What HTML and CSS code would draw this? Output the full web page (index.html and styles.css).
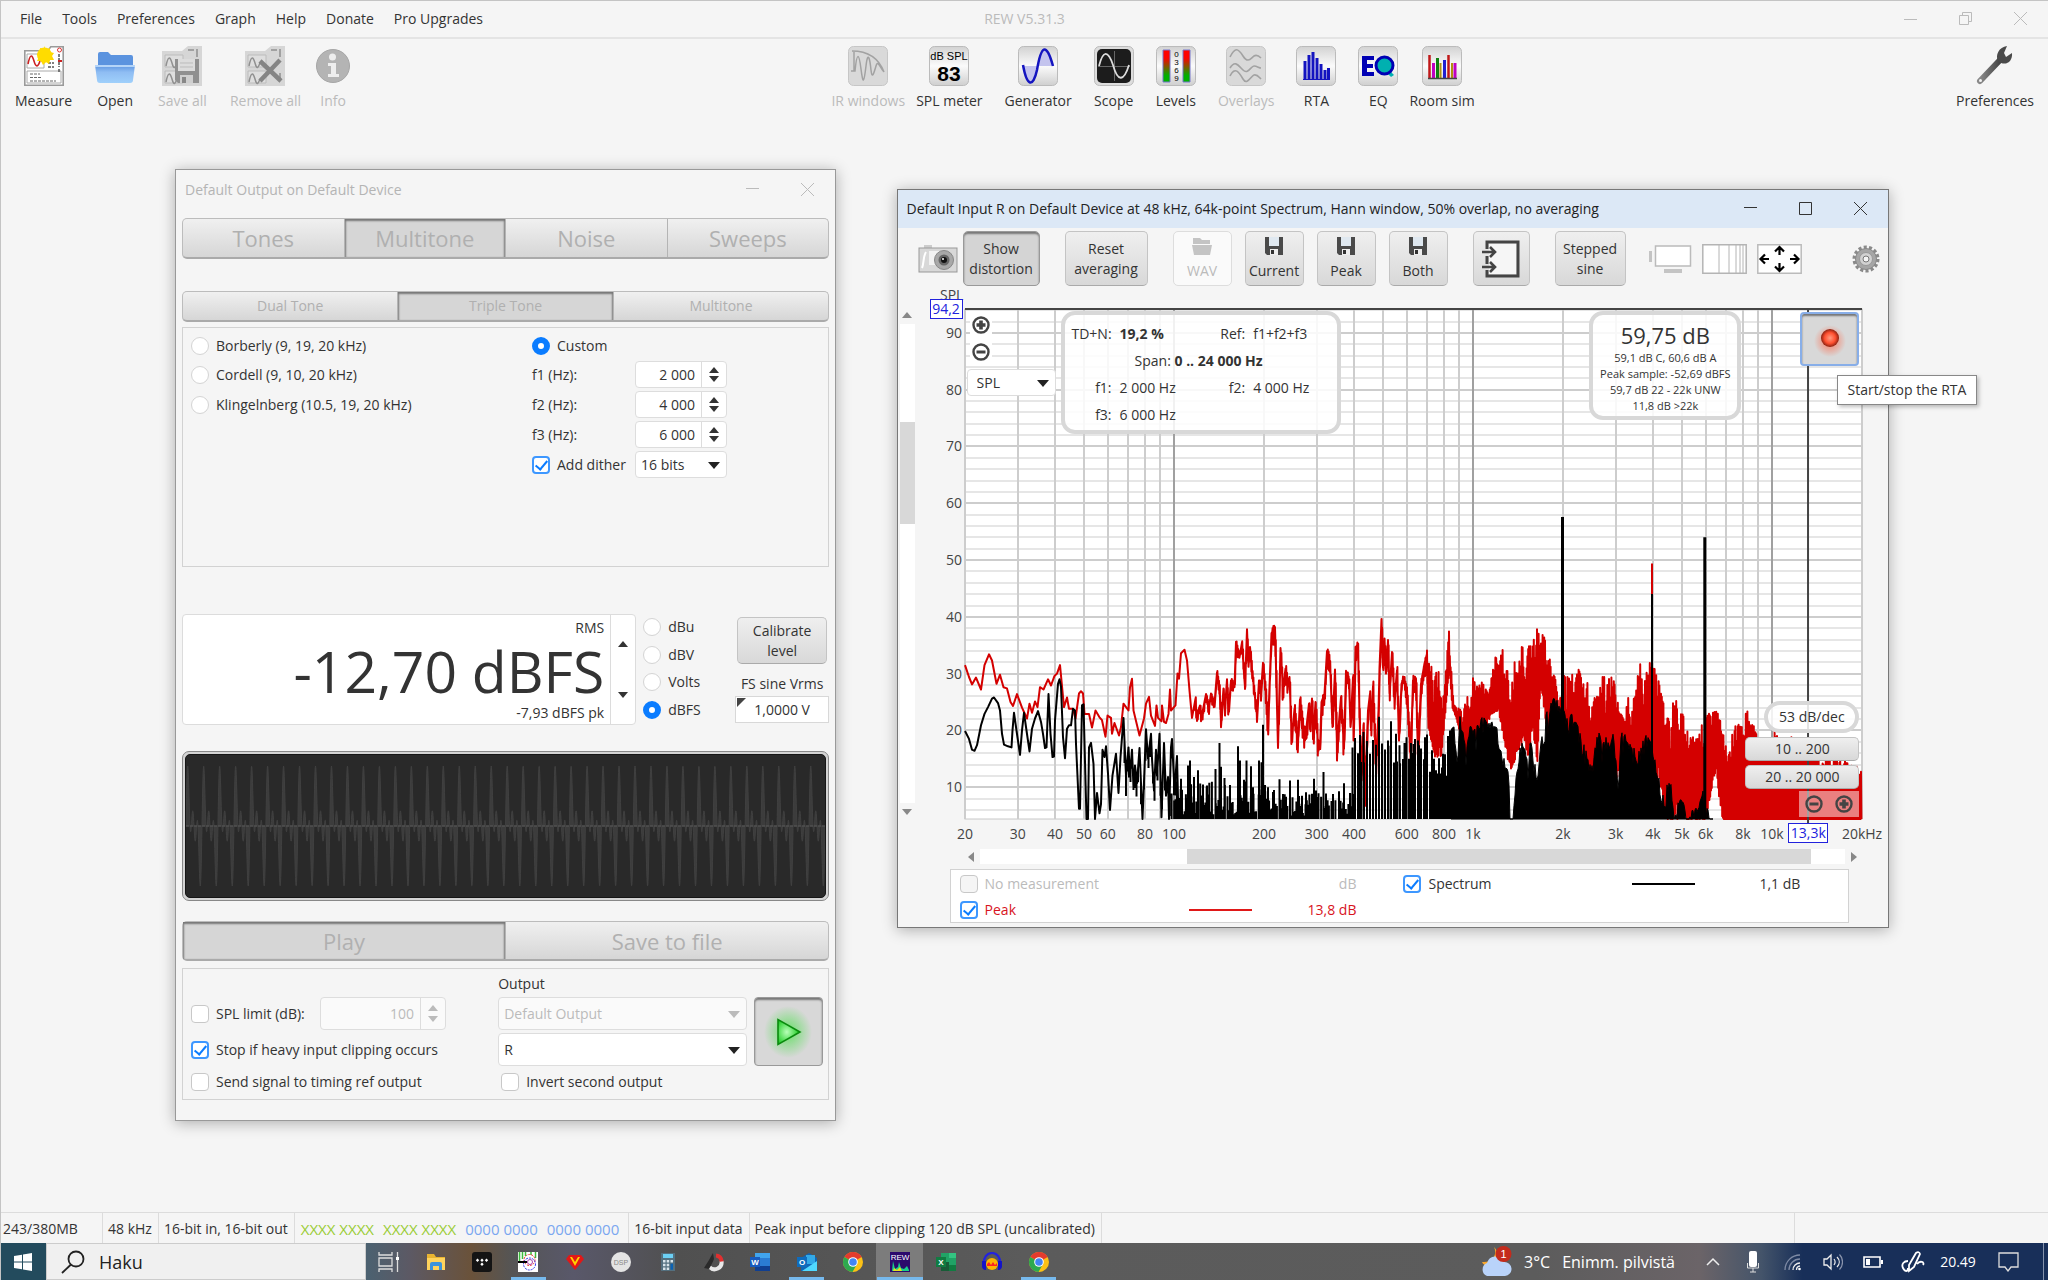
FILE: index.html
```
<!DOCTYPE html>
<html lang="en">
<head>
  <meta charset="UTF-8" />
  <meta name="viewport" content="width=device-width, initial-scale=1" />
  <title>REW V5.31.3</title>
  <link rel="stylesheet" href="styles.css">
</head>
<body>
  <!-- shared icons -->
  <svg class="defs" width="0" height="0" aria-hidden="true">
    <defs>
      <linearGradient id="gTile" x1="0" y1="0" x2="0" y2="1">
        <stop offset="0" stop-color="#d2d2d2" /><stop offset=".5" stop-color="#fbfbfb" /><stop offset="1" stop-color="#cfcfcf" />
      </linearGradient>
      <linearGradient id="gFolder" x1="0" y1="0" x2="0" y2="1">
        <stop offset="0" stop-color="#5c94e0" /><stop offset=".4" stop-color="#8fbdf3" /><stop offset="1" stop-color="#9fd0fb" />
      </linearGradient>
      <linearGradient id="gLevel" x1="0" y1="0" x2="0" y2="1">
        <stop offset="0" stop-color="#ff0000" /><stop offset=".25" stop-color="#ff0000" /><stop offset=".8" stop-color="#00b000" /><stop offset="1" stop-color="#00b000" />
      </linearGradient>
      <linearGradient id="gWrench" x1="0" y1="0" x2="1" y2="0">
        <stop offset="0" stop-color="#8a8a8a" /><stop offset="1" stop-color="#444" />
      </linearGradient>
      <radialGradient id="gPlay" cx=".4" cy=".5" r=".6">
        <stop offset="0" stop-color="#b8ffb8" /><stop offset="1" stop-color="#14c81a" />
      </radialGradient>
      <radialGradient id="gGlow">
        <stop offset="0" stop-color="#4ce04c" stop-opacity=".8" /><stop offset="1" stop-color="#4ce04c" stop-opacity="0" />
      </radialGradient>
      <radialGradient id="gLed">
        <stop offset="0" stop-color="#ff9a80" /><stop offset=".6" stop-color="#ff5030" /><stop offset="1" stop-color="#8a2010" />
      </radialGradient>
      <radialGradient id="gLedGlow">
        <stop offset="0" stop-color="#ff6040" stop-opacity=".8" /><stop offset="1" stop-color="#ff6040" stop-opacity="0" />
      </radialGradient>
      <symbol id="i-floppy" viewBox="0 0 18 18">
        <path d="M0 0h18v18H2L0 16z" fill="#4a4a4a" />
        <path d="M4 0h10v9H4z" fill="#dfe8f0" /><path d="M5 12h8v6H5z" fill="#eee" /><path d="M6 13h3v4H6z" fill="#333" />
      </symbol>
      <symbol id="i-plus" viewBox="0 0 18 18">
        <circle cx="9" cy="9" r="7.5" fill="none" stroke="#444" stroke-width="2.4" />
        <path d="M9 4.500v9M4.500 9h9" stroke="#444" stroke-width="3.600" />
      </symbol>
      <symbol id="i-minus" viewBox="0 0 18 18">
        <circle cx="9" cy="9" r="7.5" fill="none" stroke="#444" stroke-width="2.4" />
        <path d="M4.500 9h9" stroke="#444" stroke-width="3" />
      </symbol>
      <symbol id="i-chrome" viewBox="0 0 20 20">
        <circle cx="10" cy="10" r="10" fill="#fbc116" />
        <path d="M10 10L1.340 5A10 10 0 0 1 18.700 5z" fill="#e33b2e" />
        <path d="M10 10L1.340 5A10 10 0 0 0 9.500 20L14 12z" fill="#2da94f" />
        <circle cx="10" cy="10" r="4.800" fill="#fff" /><circle cx="10" cy="10" r="3.800" fill="#4285f4" />
      </symbol>
    </defs>
  </svg>

  <header class="menubar">
    <nav class="menu">
      <button type="button">File</button>
      <button type="button">Tools</button>
      <button type="button">Preferences</button>
      <button type="button">Graph</button>
      <button type="button">Help</button>
      <button type="button">Donate</button>
      <button type="button">Pro Upgrades</button>
    </nav>
    <div class="app-title">REW V5.31.3</div>
    <div class="win-controls app-controls">
      <button type="button" aria-label="Minimize"><svg width="14" height="14"><path d="M0 7.500h13" /></svg></button>
      <button type="button" aria-label="Restore"><svg width="14" height="14"><path d="M.5 3.500h9v9h-9zM3.500 3.500v-3h9v9h-3" /></svg></button>
      <button type="button" aria-label="Close"><svg width="14" height="14"><path d="M0 0l13 13M13 0L0 13" /></svg></button>
    </div>
  </header>

  <div class="toolbar">
    <div class="tool-group">
      <button type="button" class="tool">
        <svg width="40" height="40">
          <path d="M.8 4.800h23l3-4h12.400v38.400H.8z" fill="#fff" stroke="#9a9a9a" stroke-width="1.600" />
          <path d="M3 8h17v14H3zM3 25h34v12H3z" fill="#fff" stroke="#aaa" />
          <path d="M4 18c2-10 4-10 6-3s4 6 6 0" fill="none" stroke="#c22" stroke-width="1.600" />
          <path d="M6 28h10M6 31.500h12M6 35h26" stroke="#666" stroke-dasharray="3 1" />
          <path d="M24 17h6M24 21h6M35 8v6M35 16v5M35 23v3" stroke="#555" stroke-dasharray="3 1" stroke-width="1.500" />
          <circle cx="35.500" cy="4" r="2" fill="#fff" stroke="#d33" /><path d="M34 15h4" stroke="#c22" stroke-width="2" />
          <path d="M20 0l2 4 4-2 0 4 4 1-2 3 2 4-4 0-1 4-3-2-3 3-2-4-4 0 2-4-2-3 3-2 0-4 4 1z" fill="#ffd800" />
          <circle cx="20.500" cy="9" r="7.500" fill="#ffdc00" />
        </svg>
        <span>Measure</span>
      </button>
      <button type="button" class="tool">
        <svg width="40" height="40">
          <path d="M3 8q0-2 2-2h8l3 3h20q2 0 2 2v10H3z" fill="#5b93df" />
          <path d="M0 19h40l-2 15q0 3-3 3H5q-3 0-3-3z" fill="url(#gFolder)" />
          <path d="M0 19h40v2H0z" fill="#b4d4f8" />
        </svg>
        <span>Open</span>
      </button>
      <button type="button" class="tool" disabled>
        <svg width="40" height="40">
          <path d="M0 5h20L26 0h14v40H0z" fill="#d6d6d6" /><path d="M3 9h18v12H3zM3 25h18v12H3z" fill="#dedede" stroke="#bcbcbc" />
          <path d="M4 20c2-10 4-10 6-3s3 5 5 0M4 36c2-10 4-10 6-3s3 5 5 0M26 4h6M35 3v8" fill="none" stroke="#909090" stroke-width="1.500" />
          <path d="M13 13h24v24H16l-3-3z" fill="#909090" /><path d="M16 13h17v12H16z" fill="#dcdcdc" /><path d="M18 17h13M18 21h13" stroke="#bbb" /><path d="M18 29h13v8H18z" fill="#cfcfcf" /><path d="M20 31h4v6h-4z" fill="#888" />
        </svg>
        <span>Save all</span>
      </button>
      <button type="button" class="tool remove" disabled>
        <svg width="40" height="40">
          <path d="M0 5h20L26 0h14v40H0z" fill="#d6d6d6" /><path d="M3 9h18v12H3zM3 25h18v12H3z" fill="#dedede" stroke="#bcbcbc" />
          <path d="M4 20c2-10 4-10 6-3s3 5 5 0M4 36c2-10 4-10 6-3s3 5 5 0M26 4h6M35 3v8M35 27v8" fill="none" stroke="#909090" stroke-width="1.500" />
          <path d="M15 15l21 20M35 14L15 35" stroke="#858585" stroke-width="4.500" />
        </svg>
        <span>Remove all</span>
      </button>
      <button type="button" class="tool" disabled>
        <svg width="34" height="40">
          <circle cx="17" cy="20" r="16.500" fill="#b4b4b4" stroke="#a6a6a6" /><circle cx="16.500" cy="11" r="3.500" fill="#eee" />
          <path d="M12 17h8v11h3v3H12v-3h3v-8h-3z" fill="#eee" />
        </svg>
        <span>Info</span>
      </button>
    </div>

    <div class="tool-group tool-center">
      <button type="button" class="tool tight" disabled>
        <svg width="40" height="40"><rect x=".5" y=".5" width="39" height="39" rx="5" fill="#d9d9d9" stroke="#c6c6c6" />
          <path d="M4 5c16 0 27 8 32 21M6 6v19M3 25h4c2-20 4-18 6-2s3 14 5-3 4-6 5 4 3 3 5-4 4 2 8 6" fill="none" stroke="#a2a2a2" stroke-width="1.500" /></svg>
        <span>IR windows</span>
      </button>
      <button type="button" class="tool">
        <svg width="40" height="40"><rect x=".5" y=".5" width="39" height="39" rx="5" fill="url(#gTile)" stroke="#bbb" />
          <text x="20" y="14" class="t-small">dB SPL</text><text x="20" y="35" class="t-big">83</text></svg>
        <span>SPL meter</span>
      </button>
      <button type="button" class="tool">
        <svg width="40" height="40"><rect x=".5" y=".5" width="39" height="39" rx="5" fill="url(#gTile)" stroke="#bbb" />
          <path d="M5 20h14c-4 20-10 22-14 0zM20 20c4-21 11-22 15 0z" fill="#c4c4ee" />
          <path d="M5 19c4 22 10 23 14 5 4-24 9-29 16-4" fill="none" stroke="#1414c0" stroke-width="2.500" /></svg>
        <span>Generator</span>
      </button>
      <button type="button" class="tool">
        <svg width="40" height="40"><rect x=".5" y=".5" width="39" height="39" rx="5" fill="#ddd" stroke="#bbb" /><rect x="3" y="3" width="34" height="34" rx="5" fill="#1c1c1c" />
          <path d="M4 20.500h32M20.500 5v30" stroke="#666" /><path d="M5 20c4-16 9-16 14-1 5 18 11 16 16 0" fill="none" stroke="#ddd" stroke-width="1.800" /></svg>
        <span>Scope</span>
      </button>
      <button type="button" class="tool">
        <svg width="40" height="40"><rect x=".5" y=".5" width="39" height="39" rx="5" fill="url(#gTile)" stroke="#bbb" />
          <path d="M7 4h7v32H7zM27 4h7v32h-7z" fill="url(#gLevel)" stroke="#77c" />
          <text x="20.500" y="11" class="t-tiny">0</text><text x="20.500" y="19" class="t-tiny">3</text><text x="20.500" y="27" class="t-tiny">6</text><text x="20.500" y="35" class="t-tiny">9</text></svg>
        <span>Levels</span>
      </button>
      <button type="button" class="tool" disabled>
        <svg width="40" height="40"><rect x=".5" y=".5" width="39" height="39" rx="5" fill="#d9d9d9" stroke="#c6c6c6" />
          <path d="M4 11c5-10 8-9 13-1s8 2 11 0 5 0 7 2M4 22c5-8 8-3 13 2s8-4 11-4 5 2 7 2M4 30c5-10 9-4 13 3s8-3 11-4 5 2 7 4" fill="none" stroke="#a2a2a2" stroke-width="1.600" /></svg>
        <span>Overlays</span>
      </button>
      <button type="button" class="tool">
        <svg width="40" height="40"><rect x=".5" y=".5" width="39" height="39" rx="5" fill="url(#gTile)" stroke="#bbb" />
          <path d="M9 34V15M13 34V9M17 34V6M21 34V12M25 34V18M29 34V24M32.500 34V22" stroke="#1414c0" stroke-width="3" /><path d="M7 33.500h27" stroke="#1414c0" /></svg>
        <span>RTA</span>
      </button>
      <button type="button" class="tool tight">
        <svg width="40" height="40"><rect x=".5" y=".5" width="39" height="39" rx="5" fill="url(#gTile)" stroke="#bbb" />
          <path d="M31 24l5 5-3 2-4-4z" fill="#00b0b0" />
          <path d="M4 10h12v4H9v4h6v4H9v4h7v4H4z" fill="#0000b4" />
          <circle cx="26.500" cy="19.500" r="8.500" fill="#00b0b0" stroke="#0000b4" stroke-width="3" /></svg>
        <span>EQ</span>
      </button>
      <button type="button" class="tool">
        <svg width="40" height="40"><rect x=".5" y=".5" width="39" height="39" rx="5" fill="url(#gTile)" stroke="#bbb" />
          <path d="M7.500 32V9M26.500 32V9" stroke="#c01818" stroke-width="2.500" /><path d="M11.500 32V17M33 32V17" stroke="#c000c0" stroke-width="3" />
          <path d="M15.500 32V12" stroke="#108010" stroke-width="3" /><path d="M18.500 32V17M30 32V17" stroke="#b09010" stroke-width="2" /><path d="M22.500 32V14" stroke="#2020d0" stroke-width="3" /><path d="M6 32.500h29" stroke="#444" stroke-width="1.500" /></svg>
        <span>Room sim</span>
      </button>
    </div>

    <div class="tool-group">
      <button type="button" class="tool">
        <svg width="40" height="40">
          <path d="M5 35L25 14" stroke="url(#gWrench)" stroke-width="6" stroke-linecap="round" />
          <path d="M23 15c-3-6 1-14 9-15l-3 7 2 4 6-4c1 9-7 14-14 8z" fill="#4a4a4a" />
          <circle cx="5.500" cy="34.500" r="1.500" fill="#f5f5f5" />
        </svg>
        <span>Preferences</span>
      </button>
    </div>
  </div>

  <main class="desktop">
    <!-- signal generator -->
    <section class="window generator">
      <div class="titlebar">
        <h2>Default Output on Default Device</h2>
        <div class="win-controls">
          <button type="button" aria-label="Minimize"><svg width="14" height="14"><path d="M0 5.500h13" /></svg></button>
          <button type="button" aria-label="Close"><svg width="14" height="14"><path d="M0 0l13 13M13 0L0 13" /></svg></button>
        </div>
      </div>
      <div class="gen-body">
        <div class="tabs tabs-large">
          <button type="button">Tones</button>
          <button type="button" class="active">Multitone</button>
          <button type="button">Noise</button>
          <button type="button">Sweeps</button>
        </div>
        <div class="tabs tabs-small">
          <button type="button">Dual Tone</button>
          <button type="button" class="active">Triple Tone</button>
          <button type="button">Multitone</button>
        </div>

        <div class="panel tone-panel">
          <label class="choice"><input type="radio" name="preset" /> Borberly (9, 19, 20 kHz)</label>
          <label class="choice span2"><input type="radio" name="preset" checked /> Custom</label>

          <label class="choice"><input type="radio" name="preset" /> Cordell (9, 10, 20 kHz)</label>
          <label for="f1">f1 (Hz):</label>
          <div class="spinner"><input type="text" id="f1" value="2 000" /><div class="steps"><button type="button" class="up" aria-label="Up"></button><button type="button" class="down" aria-label="Down"></button></div></div>

          <label class="choice"><input type="radio" name="preset" /> Klingelnberg (10.5, 19, 20 kHz)</label>
          <label for="f2">f2 (Hz):</label>
          <div class="spinner"><input type="text" id="f2" value="4 000" /><div class="steps"><button type="button" class="up" aria-label="Up"></button><button type="button" class="down" aria-label="Down"></button></div></div>

          <label for="f3" class="col2">f3 (Hz):</label>
          <div class="spinner"><input type="text" id="f3" value="6 000" /><div class="steps"><button type="button" class="up" aria-label="Up"></button><button type="button" class="down" aria-label="Down"></button></div></div>

          <label class="choice col2"><input type="checkbox" checked /> Add dither</label>
          <div class="select"><select aria-label="Dither bits"><option>16 bits</option></select></div>
        </div>

        <div class="level-row">
          <div class="lcd">
            <div class="lcd-text">
              <span>RMS</span>
              <strong>-12,70 dBFS</strong>
              <span>-7,93 dBFS pk</span>
            </div>
            <div class="lcd-steps"><button type="button" class="up" aria-label="Up"></button><button type="button" class="down" aria-label="Down"></button></div>
          </div>
          <div class="units">
            <label class="choice"><input type="radio" name="unit" /> dBu</label>
            <label class="choice"><input type="radio" name="unit" /> dBV</label>
            <label class="choice"><input type="radio" name="unit" /> Volts</label>
            <label class="choice"><input type="radio" name="unit" checked /> dBFS</label>
          </div>
          <div class="calibrate">
            <button type="button" class="btn">Calibrate<br>level</button>
            <label for="vrms">FS sine Vrms</label>
            <div class="vrms"><input type="text" id="vrms" value="1,0000 V" /></div>
          </div>
        </div>

        <div class="wave"><svg id="wave"></svg></div>

        <div class="tabs tabs-large tabs-play">
          <button type="button" class="active">Play</button>
          <button type="button">Save to file</button>
        </div>

        <div class="panel output-panel">
          <span class="output-label">Output</span>
          <div class="spl-limit">
            <label class="choice"><input type="checkbox" /> SPL limit (dB):</label>
            <div class="spinner disabled"><input type="text" aria-label="SPL limit" value="100" disabled /><div class="steps"><button type="button" class="up" aria-label="Up" disabled></button><button type="button" class="down" aria-label="Down" disabled></button></div></div>
          </div>
          <div class="select disabled"><select aria-label="Output device" disabled><option>Default Output</option></select></div>
          <button type="button" class="play" aria-label="Play">
            <svg width="52" height="56"><ellipse cx="25" cy="28" rx="24" ry="26" fill="url(#gGlow)" /><path d="M15 15.500v25L37 28z" fill="url(#gPlay)" stroke="#0a8a0e" stroke-width="1.600" /></svg>
          </button>
          <label class="choice"><input type="checkbox" checked /> Stop if heavy input clipping occurs</label>
          <div class="select"><select aria-label="Output channel"><option>R</option></select></div>
          <label class="choice"><input type="checkbox" /> Send signal to timing ref output</label>
          <label class="choice invert"><input type="checkbox" /> Invert second output</label>
        </div>
      </div>
    </section>

    <!-- real time analyser -->
    <section class="window rta">
      <div class="titlebar">
        <h2>Default Input R on Default Device at 48 kHz, 64k-point Spectrum, Hann window, 50% overlap, no averaging</h2>
        <div class="win-controls">
          <button type="button" aria-label="Minimize"><svg width="14" height="14"><path d="M0 5.500h13" /></svg></button>
          <button type="button" aria-label="Maximize"><svg width="14" height="14"><path d="M.5 .5h12v12h-12z" /></svg></button>
          <button type="button" aria-label="Close"><svg width="14" height="14"><path d="M0 0l13 13M13 0L0 13" /></svg></button>
        </div>
      </div>
      <div class="rta-tools">
        <div class="btn-group">
          <button type="button" class="plain" aria-label="Capture">
            <svg width="40" height="28">
              <rect x="6" y="0" width="8" height="4" fill="#ccc" /><rect x="1" y="3" width="38" height="24" fill="#d8d8d8" stroke="#999" />
              <path d="M4 23c2-4 1-12 4-16" stroke="#fff" stroke-width="2" fill="none" /><path d="M11 6h15v14H11z" fill="#f2f2f2" />
              <circle cx="26" cy="15" r="9.500" fill="#a8a8a8" stroke="#888" /><circle cx="26" cy="15" r="5.500" fill="#666" /><circle cx="26" cy="15" r="3" fill="#111" /><circle cx="25" cy="14" r="1" fill="#fff" />
            </svg>
          </button>
          <button type="button" class="btn pressed w77">Show<br>distortion</button>
        </div>
        <button type="button" class="btn w83">Reset<br>averaging</button>
        <div class="btn-group saves">
          <button type="button" class="btn icon-btn" disabled><svg width="20" height="18"><path d="M1 1h7l2 2h8v4H1zM0 8h20l-2 10H2z" fill="#c4c4c4" /></svg>WAV</button>
          <button type="button" class="btn icon-btn"><svg width="18" height="18"><use href="#i-floppy" /></svg>Current</button>
          <button type="button" class="btn icon-btn"><svg width="18" height="18"><use href="#i-floppy" /></svg>Peak</button>
          <button type="button" class="btn icon-btn"><svg width="18" height="18"><use href="#i-floppy" /></svg>Both</button>
        </div>
        <button type="button" class="btn w57" aria-label="Input mapping">
          <svg width="38" height="38"><path d="M5 9V2h31v34H5v-6M5 16v8" fill="none" stroke="#444" stroke-width="3" /><path d="M7 4h27v30H7z" fill="#f6f6f6" />
            <path d="M0 12h13M8 7l5 5-5 5M0 27h13M8 22l5 5-5 5" fill="none" stroke="#444" stroke-width="2.600" /></svg>
        </button>
        <button type="button" class="btn w71">Stepped<br>sine</button>
        <div class="btn-group view-tools">
          <button type="button" class="plain" aria-label="Scrollbars"><svg width="44" height="28"><path d="M7.500 1h35v20h-35z" fill="#fff" stroke="#bbb" stroke-width="1.500" /><path d="M1 6h3v11H1zM16 24h18v4H16z" fill="#c4c4c4" /></svg></button>
          <button type="button" class="plain" aria-label="Frequency axis"><svg width="45" height="30"><path d="M.8 .8h43.400v28.400H.8z" fill="#fff" stroke="#b4b4b4" stroke-width="1.500" /><path d="M17 1v28M27 1v28M34 1v28M38 1v28M41 1v28" stroke="#b4b4b4" /></svg></button>
          <button type="button" class="plain" aria-label="Graph limits"><svg width="45" height="30"><path d="M.8 .8h43.400v28.400H.8z" fill="#fff" stroke="#bbb" stroke-width="1.500" />
            <path d="M12 15H4M8 10.500L3.500 15 8 19.500M33 15h8M37 10.500l4.500 4.500-4.500 4.500M22.500 11V4M18 7.500L22.500 3 27 7.500M22.500 19v7M18 22.500l4.500 4.500 4.500-4.500" fill="none" stroke="#000" stroke-width="2.200" /></svg></button>
        </div>
        <button type="button" class="plain gear" aria-label="Settings">
          <svg width="28" height="28"><circle cx="14" cy="14" r="11.500" fill="none" stroke="#8a8a8a" stroke-width="4" stroke-dasharray="3 2.160" /><circle cx="14" cy="14" r="10.500" fill="#a6a6a6" stroke="#888" /><circle cx="14" cy="14" r="6.500" fill="#d2d2d2" stroke="#999" /><circle cx="14" cy="14" r="3" fill="#f5f5f5" stroke="#777" /></svg>
        </button>
      </div>

      <div class="chart-row">
        <div class="scroll vertical">
          <button type="button" class="up" aria-label="Scroll up"></button>
          <div class="track"><div class="thumb"></div></div>
          <button type="button" class="down" aria-label="Scroll down"></button>
        </div>
        <div class="chart">
          <svg id="chart"></svg>
          <div class="cursor-tag cursor-y">94,2</div>
          <div class="cursor-tag cursor-x">13,3k</div>

          <div class="zoom-y">
            <button type="button" class="plain" aria-label="Zoom in"><svg width="18" height="18"><use href="#i-plus" /></svg></button>
            <button type="button" class="plain" aria-label="Zoom out"><svg width="18" height="18"><use href="#i-minus" /></svg></button>
          </div>
          <div class="select unit-select"><select aria-label="Y axis"><option>SPL</option></select></div>

          <div class="bubble distortion">
            <div class="pair"><span>TD+N:</span><b>19,2 %</b></div>
            <div class="pair"><span>Ref:</span><span>f1+f2+f3</span></div>
            <div class="wide">Span: <b>0 .. 24 000 Hz</b></div>
            <div class="pair"><span>f1:</span><span>2 000 Hz</span></div>
            <div class="pair"><span>f2:</span><span>4 000 Hz</span></div>
            <div class="pair"><span>f3:</span><span>6 000 Hz</span></div>
          </div>

          <div class="bubble levels">
            <strong>59,75 dB</strong>
            <span>59,1 dB C, 60,6 dB A</span>
            <span>Peak sample: -52,69 dBFS</span>
            <span>59,7 dB 22 - 22k UNW</span>
            <span>11,8 dB &gt;22k</span>
          </div>

          <button type="button" class="record" aria-label="Start/stop the RTA" aria-describedby="tip">
            <svg width="40" height="44"><circle cx="20" cy="24" r="16" fill="url(#gLedGlow)" /><circle cx="20" cy="21" r="9" fill="url(#gLed)" /></svg>
          </button>
          <div class="tooltip" role="tooltip" id="tip">Start/stop the RTA</div>

          <div class="range-tools">
            <div class="bubble slope">53 dB/dec</div>
            <button type="button" class="btn">10 .. 200</button>
            <button type="button" class="btn">20 .. 20 000</button>
            <div class="zoom-x">
              <button type="button" class="plain" aria-label="Zoom out"><svg width="18" height="18"><use href="#i-minus" /></svg></button>
              <button type="button" class="plain" aria-label="Zoom in"><svg width="18" height="18"><use href="#i-plus" /></svg></button>
            </div>
          </div>
        </div>
      </div>

      <div class="scroll horizontal">
        <button type="button" class="left" aria-label="Scroll left"></button>
        <div class="track"><div class="thumb"></div></div>
        <button type="button" class="right" aria-label="Scroll right"></button>
      </div>

      <div class="legend">
        <div class="trace muted"><label class="choice"><input type="checkbox" disabled /> No measurement</label><span>dB</span></div>
        <div class="trace"><label class="choice"><input type="checkbox" checked /> Spectrum</label><i></i><span>1,1 dB</span></div>
        <div class="trace peak"><label class="choice"><input type="checkbox" checked /> Peak</label><i></i><span>13,8 dB</span></div>
      </div>
    </section>
  </main>

  <footer class="statusbar">
    <div class="s-mem">243/380MB</div>
    <div>48 kHz</div>
    <div>16-bit in, 16-bit out</div>
    <div class="bits"><span class="on">XXXX XXXX</span><span class="on">XXXX XXXX</span><span class="off">0000 0000</span><span class="off">0000 0000</span></div>
    <div>16-bit input data</div>
    <div>Peak input before clipping 120 dB SPL (uncalibrated)</div>
    <div class="s-fill"></div>
    <div class="s-end"></div>
  </footer>

  <div class="taskbar">
    <button type="button" class="start" aria-label="Start"><svg width="18" height="18"><path d="M0 3l8-1.200V8.500H0zM9 1.600L18 0v8.500H9zM0 9.500h8v6.700L0 15zM9 9.500h9V18L9 16.400z" fill="#fff" /></svg></button>
    <div class="search">
      <svg width="24" height="24"><circle cx="15" cy="9" r="7.500" fill="none" stroke="#222" stroke-width="1.800" /><path d="M10 14.500L1 23" stroke="#222" stroke-width="1.800" /></svg>
      <input type="text" aria-label="Search" placeholder="Haku" />
    </div>
    <div class="apps">
      <button type="button" class="app" aria-label="Task view"><svg width="22" height="20"><path d="M1 0v3h13V0M1 20v-3h13v3M1 6h13v8H1zM19.500 0v5M19.500 8v12" fill="none" stroke="#ddd" stroke-width="1.300" /><path d="M18 5h3v3h-3z" fill="#fff" /></svg></button>
      <button type="button" class="app" aria-label="Explorer"><svg width="20" height="20"><path d="M1 2h7l2 3h9v13H1z" fill="#e9b431" /><path d="M1 6h18v12H1z" fill="#ffd35c" /><path d="M4 18v-6q0-2 2-2h8q2 0 2 2v6h-3v-4H7v4z" fill="#3b93dc" /></svg></button>
      <button type="button" class="app" aria-label="Tidal"><svg width="20" height="20"><rect width="20" height="20" rx="3" fill="#141414" /><path d="M5.500 6.500l1.700 1.700-1.700 1.700-1.700-1.700zM10 6.500l1.700 1.700L10 9.900 8.300 8.200zM14.500 6.500l1.700 1.700-1.700 1.700-1.700-1.700zM10 10.500l1.700 1.700-1.700 1.700-1.700-1.700z" fill="#fff" /></svg></button>
      <button type="button" class="app running" aria-label="Analyser"><svg width="20" height="20"><path d="M0 0h20v20H0z" fill="#fff" /><path d="M1.500 0v9M4.500 0v7M7.500 0v4M17.500 0v6M13 0v3" stroke="#3dbb3d" stroke-width="1.500" /><circle cx="11.500" cy="8" r="5.500" fill="none" stroke="#e33" stroke-dasharray="2 1" /><circle cx="11.500" cy="12" r="6" fill="none" stroke="#33e" stroke-dasharray="2 1" /><circle cx="12" cy="10" r="2.500" fill="none" stroke="#a4a" /><path d="M0 10h9" stroke="#000" stroke-width="2" /></svg></button>
      <button type="button" class="app" aria-label="Voicemeeter"><svg width="20" height="20"><path d="M4 3h12l3 4-9 11L1 7z" fill="#e01818" /><path d="M5 5l5 9 5-9h-2l-3 5-3-5z" fill="#ffd400" /></svg></button>
      <button type="button" class="app" aria-label="DSP"><svg width="20" height="20"><circle cx="10" cy="10" r="10" fill="#e4e4e4" /><text x="10" y="13" class="t-dsp">DSP</text></svg></button>
      <button type="button" class="app" aria-label="Calculator"><svg width="20" height="20"><path d="M3 1h14v18H3z" fill="#54707f" /><path d="M5 2h10v4H5z" fill="#6cd0f4" /><path d="M5 8h2.500v2.500H5zM8.700 8h2.500v2.500H8.700zM5 11.700h2.500v2.500H5zM8.700 11.700h2.500v2.500H8.700zM5 15.400h2.500v2.500H5zM8.700 15.400h2.500v2.500H8.700zM12.500 8H15v2.500h-2.500z" fill="#d8e4ea" /><path d="M12.500 11.700H15v6h-2.500z" fill="#0b62b4" /></svg></button>
      <button type="button" class="app" aria-label="Recorder"><svg width="20" height="20"><path d="M17.500 9a7 7 0 0 1-12 6" fill="none" stroke="#e8e8e8" stroke-width="4" /><path d="M12 3.500q5 .5 5.700 6" fill="none" stroke="#e03030" stroke-width="4" /><path d="M9 1C6 6 4 10 0 16l5 1c2-4 4-7 5-10z" fill="#2a2a2a" /></svg></button>
      <button type="button" class="app" aria-label="Word"><svg width="20" height="20"><path d="M5 1h15v18H5z" fill="#2b7cd3" /><path d="M5 1h15v5H5z" fill="#41a5ee" /><path d="M5 14h15v5H5z" fill="#103f91" /><path d="M0 5h10v10H0z" fill="#185abd" /><text x="5" y="13" class="t-office">W</text></svg></button>
      <button type="button" class="app running" aria-label="Outlook"><svg width="20" height="20"><path d="M4 6l8-5 8 5v13H4z" fill="#1066b5" /><path d="M9 3h9v9H9z" fill="#32a9e7" /><path d="M5 19l15-10v10z" fill="#50d9ff" /><path d="M0 5h10v10H0z" fill="#0f6cbd" /><text x="5" y="13" class="t-office">O</text></svg></button>
      <button type="button" class="app" aria-label="Chrome"><svg width="20" height="20"><use href="#i-chrome" /></svg></button>
      <button type="button" class="app current" aria-label="REW"><svg width="20" height="20"><path d="M0 0h20v20H0z" fill="#2c0a6c" /><text x="10" y="8" class="t-rew">REW</text><path d="M2 19l1-10 2 8 3-2 1-5 2 6 3 1 3-3 2 4v1z" fill="#19d08a" /><path d="M3 19l1-3 3 2 3-3 2 4z" fill="#e8e020" /></svg></button>
      <button type="button" class="app" aria-label="Excel"><svg width="20" height="20"><path d="M5 1h15v18H5z" fill="#21a366" /><path d="M5 10h8v9H5z" fill="#185c37" /><path d="M13 1h7v5h-7z" fill="#33c481" /><path d="M13 13h7v6h-7z" fill="#107c41" /><path d="M0 5h10v10H0z" fill="#107c41" /><text x="5" y="13" class="t-office">X</text></svg></button>
      <button type="button" class="app" aria-label="Audacity"><svg width="20" height="20"><circle cx="10" cy="12" r="6" fill="#ffb400" /><path d="M5 12l2-2 2 3 2-3 2 3 2-2v3H5z" fill="#f22" /><path d="M2 13C0-3 20-3 18 13" fill="none" stroke="#2222e0" stroke-width="2.200" /><path d="M0 9h4v9H3q-3-1-3-4zM20 9h-4v9h1q3-1 3-4z" fill="#1414c8" /></svg></button>
      <button type="button" class="app running" aria-label="Chrome"><svg width="20" height="20"><use href="#i-chrome" /></svg></button>
    </div>
    <div class="tray">
      <button type="button" class="weather">
        <svg width="32" height="32"><path d="M14 1c4 8-2 16-12 15 2 6 16 6 16-5 0-5-2-8-4-10z" fill="#f9a72b" /><path d="M7 30a7 7 0 0 1 0-13 9 9 0 0 1 17-1 7 7 0 0 1 1 14z" fill="#b9d3fa" /><circle cx="23.500" cy="8" r="8" fill="#c42b1c" /><text x="23.500" y="12" class="t-badge">1</text></svg>
        <span>3°C</span><span>Enimm. pilvistä</span>
      </button>
      <button type="button" class="tray-btn" aria-label="Hidden icons"><svg width="14" height="9"><path d="M1 8l6-6 6 6" fill="none" stroke="#eee" stroke-width="1.500" /></svg></button>
      <button type="button" class="tray-btn" aria-label="Microphone"><svg width="12" height="22"><rect x="2" y="0" width="8" height="16" rx="2" fill="#fff" /><path d="M.5 12v5h11v-5M6 17v4M3 21h6" fill="none" stroke="#ddd" /></svg></button>
      <button type="button" class="tray-btn" aria-label="Network"><svg width="18" height="18"><path d="M1 17A15 15 0 0 1 16 2M5 17A11 11 0 0 1 16 6" fill="none" stroke="#7f8ba5" stroke-width="1.300" /><path d="M9 17a7 7 0 0 1 7-7M12.500 17a4 4 0 0 1 3.500-4" fill="none" stroke="#eee" stroke-width="1.300" /><circle cx="15.500" cy="16" r="1.300" fill="#fff" /></svg></button>
      <button type="button" class="tray-btn" aria-label="Volume"><svg width="20" height="18"><path d="M1 6h3l4-4v14l-4-4H1z" fill="none" stroke="#eee" stroke-width="1.300" /><path d="M11 6c1.500 2 1.500 4 0 6M14 4c3 3 3 7 0 10" fill="none" stroke="#eee" stroke-width="1.200" /><path d="M16.500 1.500c4 4 4 11 0 15" fill="none" stroke="#8a94ac" stroke-width="1.200" /></svg></button>
      <button type="button" class="tray-btn" aria-label="Battery"><svg width="20" height="12"><path d="M1 1h16v10H1z" fill="none" stroke="#fff" stroke-width="1.600" /><path d="M3 3h4v6H3zM18 4h2v4h-2z" fill="#fff" /></svg></button>
      <button type="button" class="tray-btn" aria-label="Ink"><svg width="24" height="24"><path d="M8 15L15 3q3-2 4 1l-6 13-5 4zM7 11c-4 0-7 3-5 7s5 4 5 0M16 14c3-4 8-2 6 1" fill="none" stroke="#fff" stroke-width="1.800" /></svg></button>
      <span class="clock">20.49</span>
      <button type="button" class="notify" aria-label="Notifications"><svg width="21" height="20"><path d="M1 1h19v14h-7l-3 4-3-4H1z" fill="none" stroke="#ddd" stroke-width="1.300" /></svg></button>
    </div>
  </div>

  <script src="script.js"></script>
</body>
</html>
```
FILE: styles.css
```
* {
  margin: 0;
  padding: 0;
  box-sizing: border-box;
}

body {
  font-family: 'Open Sans', 'Noto Sans', sans-serif;
  font-size: 14px;
  line-height: 20px;
  color: #333;
  background: #f5f5f5;
  display: flex;
  flex-direction: column;
  min-height: 100vh;
  border-top: 1px solid #c4c4c4;
  border-left: 1px solid #c4c4c4;
  overflow-x: hidden;
}

button,
input,
select {
  font: inherit;
  color: inherit;
}

button {
  border: none;
  background: none;
}

svg {
  display: block;
}

.defs {
  position: absolute;
}

/* menu bar */
.menubar {
  display: grid;
  grid-template-columns: 1fr auto 1fr;
  align-items: center;
  height: 38px;
  border-bottom: 2px solid #e4e4e4;
}

.menu {
  display: flex;
  gap: 20px;
  padding-left: 19px;
}

.app-title {
  color: #bbb;
}

.win-controls {
  display: flex;
  gap: 41px;
  margin-left: auto;
}

.win-controls svg path {
  fill: none;
  stroke: #333;
}

.app-controls {
  padding-right: 20px;
}

.app-controls svg path,
.generator .win-controls svg path {
  stroke: #bbb;
}

/* main toolbar */
.toolbar {
  display: flex;
  justify-content: space-between;
  padding: 7px 14px 8px;
  height: 80px;
}

.tool-group {
  display: flex;
  align-items: flex-start;
  gap: 23px;
}

.tool-center {
  gap: 22px;
}

.tool {
  display: flex;
  flex-direction: column;
  align-items: center;
  gap: 5px;
  white-space: nowrap;
}

.tool.tight {
  margin-right: -11px;
}

.tool.remove {
  margin-right: -8px;
}

.tool:disabled {
  color: #bbb;
}

.tool text,
.taskbar text {
  font-family: 'Liberation Sans', Arial, sans-serif;
  text-anchor: middle;
}

.t-small { font-size: 11px; }
.t-big { font-size: 21px; font-weight: bold; }
.t-tiny { font-size: 8px; }

/* windows */
.desktop {
  position: relative;
  flex: 1;
  min-height: 1010px;
}

.window {
  position: absolute;
  background: #f5f5f5;
  border: 1px solid #999;
  box-shadow: 0 2px 14px rgba(0, 0, 0, 0.3);
}

.titlebar {
  display: flex;
  align-items: center;
  justify-content: space-between;
  height: 38px;
  padding: 0 20px 0 9px;
}

.titlebar h2 {
  font-size: 14px;
  font-weight: 400;
  white-space: nowrap;
}

.generator {
  top: 50px;
  left: 8.5%;
  width: 32.3%;
  min-width: 640px;
}

.generator .titlebar {
  height: 39px;
  color: #b4b4b4;
}

.gen-body {
  padding: 9px 6px 20px;
}

.tabs {
  display: flex;
  border: 1px solid #bcbcbc;
  border-bottom: 2px solid #aaa;
  border-radius: 5px;
  background: linear-gradient(#f0f0f0, #d6d6d6);
  color: #b0b0b0;
}

.tabs button {
  flex: 1;
  border-left: 1px solid #b4b4b4;
}

.tabs button:first-child {
  border-left: none;
}

.tabs button.active {
  background: #d6d6d6;
  box-shadow: inset 0 2px 2px #777, inset 2px 0 2px -1px #888, inset -2px 0 2px -1px #888;
}

.tabs-large {
  height: 41px;
  font-size: 22px;
}

.tabs-small {
  height: 31px;
  margin-top: 32px;
}

.panel {
  border: 1px solid #d2d2d2;
}

.tone-panel {
  display: grid;
  grid-template-columns: 341px 103px 92px;
  grid-template-rows: 24px repeat(4, 27px);
  gap: 3px 0;
  align-items: center;
  height: 240px;
  margin-top: 5px;
  padding: 6px 8px;
}

.span2 {
  grid-column: span 2;
}

.col2 {
  grid-column: 2;
}

.choice {
  display: flex;
  align-items: center;
  gap: 7px;
  white-space: nowrap;
}

.choice input {
  appearance: none;
  position: relative;
  flex: none;
  width: 18px;
  height: 18px;
  background: #fff;
  border: 1px solid #c8c8c8;
}

.choice input[type='radio'] {
  border-radius: 50%;
  border: 1px solid #d4d4d4;
}

.choice input[type='radio']:checked {
  border: 6px solid #0a7cff;
}

.choice input[type='checkbox'] {
  border-radius: 4px;
}

.choice input[type='checkbox']:checked {
  border: 2px solid #3d97ff;
}

.choice input[type='checkbox']:checked::after {
  content: '';
  position: absolute;
  left: 4px;
  top: 0;
  width: 5px;
  height: 10px;
  border: solid #0a7cff;
  border-width: 0 2px 2px 0;
  transform: rotate(40deg);
}

.choice input:disabled {
  background: #f5f5f5;
}

.spinner,
.select {
  display: flex;
  height: 100%;
  border: 1px solid #ddd;
  border-radius: 4px;
  background: #fff;
}

.spinner input {
  flex: 1;
  min-width: 0;
  border: none;
  background: none;
  text-align: right;
  padding-right: 6px;
}

.steps {
  width: 25px;
  display: flex;
  flex-direction: column;
  align-items: center;
  justify-content: center;
  gap: 3px;
  border-left: 1px solid #ddd;
}

.up,
.down,
.left,
.right {
  width: 0;
  height: 0;
  border: 5px solid transparent;
}

.up {
  border-top: none;
  border-bottom: 6px solid #333;
}

.down {
  border-bottom: none;
  border-top: 6px solid #333;
}

.left {
  border-left: none;
  border-right: 6px solid #888;
}

.right {
  border-right: none;
  border-left: 6px solid #888;
}

.disabled {
  background: #fafafa;
  color: #bbb;
}

.disabled .steps {
  gap: 5px;
}

.disabled .up {
  border-bottom-color: #bbb;
}

.disabled .down {
  border-top-color: #bbb;
}

.select {
  position: relative;
}

.select::after {
  content: '';
  position: absolute;
  right: 6px;
  top: calc(50% - 3px);
  border: 6px solid transparent;
  border-bottom: none;
  border-top: 7px solid #222;
  pointer-events: none;
}

.select.disabled::after {
  border-top-color: #bbb;
}

.select select {
  appearance: none;
  flex: 1;
  min-width: 0;
  padding-left: 5px;
  border: none;
  background: none;
  opacity: 1;
}

/* level readout */
.level-row {
  display: flex;
  height: 111px;
  margin-top: 47px;
}

.lcd {
  flex: 1;
  display: flex;
  margin-right: 7px;
  background: #fff;
  border: 1px solid #dcdcdc;
  border-radius: 4px;
}

.lcd-text {
  flex: 1;
  display: flex;
  flex-direction: column;
  justify-content: space-between;
  align-items: flex-end;
  padding: 3px 6px 1px;
}

.lcd-text strong {
  font-size: 57px;
  font-weight: 400;
  line-height: 62px;
}

.lcd-steps {
  width: 25px;
  display: flex;
  flex-direction: column;
  align-items: center;
  justify-content: center;
  gap: 45px;
  border-left: 1px solid #dcdcdc;
}

.units {
  width: 92px;
  display: flex;
  flex-direction: column;
  justify-content: space-between;
  padding: 3px 0 5px;
}

.calibrate {
  width: 94px;
  display: flex;
  flex-direction: column;
  align-items: center;
  padding-top: 3px;
}

.btn {
  border: 1px solid #c4c4c4;
  border-bottom-color: #aaa;
  border-radius: 5px;
  background: linear-gradient(#efefef, #d8d8d8);
  white-space: nowrap;
}

.calibrate .btn {
  width: 90px;
  height: 47px;
  margin-bottom: 10px;
}

.vrms {
  position: relative;
  align-self: stretch;
  height: 27px;
  margin-top: 2px;
}

.vrms input {
  width: 100%;
  height: 27px;
  border: 1px solid #d8d8d8;
  background: #fff;
  text-align: center;
}

.vrms::before {
  content: '';
  position: absolute;
  left: 2px;
  top: 2px;
  border-top: 9px solid #444;
  border-right: 9px solid transparent;
}

.wave {
  height: 150px;
  margin-top: 26px;
  padding: 2px;
  border: 1px solid #888;
  border-radius: 7px;
  background: #d4d4d4;
}

.wave svg {
  width: 100%;
  height: 100%;
  border: 1px solid #161616;
  border-radius: 5px;
  background: #292929;
}

.wave path {
  fill: #3c3c3c;
  stroke: #404040;
}

.wave line {
  stroke: #585858;
}

.tabs-play {
  height: 40px;
  margin-top: 20px;
}

.output-panel {
  display: grid;
  grid-template-columns: 1fr 249px 69px;
  grid-template-rows: 21px 33px 33px 26px;
  gap: 3px 7px;
  align-items: center;
  height: 132px;
  margin-top: 7px;
  padding: 4px 5px 0 8px;
}

.output-label {
  grid-column: 2;
}

.spl-limit {
  grid-column: 1;
  display: grid;
  grid-template-columns: 129px 126px;
  height: 33px;
  align-items: center;
}

.play {
  grid-column: 3;
  grid-row: 2 / 4;
  align-self: stretch;
  display: flex;
  align-items: center;
  justify-content: center;
  background: #d8d8d8;
  border: 1px solid #999;
  border-radius: 4px;
  box-shadow: inset 0 2px 2px #777;
}

.invert {
  padding-left: 3px;
}

/* rta window */
.rta {
  top: 70px;
  left: 43.75%;
  width: 48.5%;
  min-width: 960px;
  border-color: #777;
}

.rta .titlebar {
  background: #dce8f6;
  color: #222;
}

.rta-tools {
  display: flex;
  align-items: center;
  gap: 25px;
  padding: 3px 8px 4px 20px;
}

.btn-group {
  display: flex;
  align-items: center;
  gap: 5px;
}

.saves {
  gap: 13px;
}

.view-tools {
  gap: 10px;
  margin-left: -3px;
}

.rta-tools .btn {
  height: 55px;
  display: flex;
  align-items: center;
  justify-content: center;
}

.rta-tools .pressed {
  background: #d4d4d4;
  border-color: #999;
  box-shadow: inset 0 2px 2px #777;
}

.w57 { width: 57px; }
.w71 { width: 71px; }
.w77 { width: 77px; }
.w83 { width: 83px; }

.rta-tools .icon-btn {
  width: 59px;
  flex-direction: column;
  gap: 6px;
}

.rta-tools .icon-btn:disabled {
  background: #fafafa;
  border-color: #ddd;
  color: #bbb;
}

.gear {
  margin-left: auto;
}

.chart-row {
  display: flex;
}

.scroll {
  display: flex;
  align-items: center;
}

.track {
  flex: 1;
  display: flex;
  background: #fff;
}

.thumb {
  background: #d8d8d8;
}

.vertical {
  flex-direction: column;
  width: 15px;
  margin: 22px 1px 34px 2px;
  gap: 6px;
}

.vertical .track {
  width: 15px;
  flex-direction: column;
}

.vertical .thumb {
  height: 102px;
  margin-top: 98px;
}

.vertical .up {
  border-bottom-color: #888;
}

.vertical .down {
  border-top-color: #888;
}

.horizontal {
  gap: 6px;
  margin: 0 31px 0 70px;
}

.horizontal .track {
  height: 15px;
}

.horizontal .thumb {
  width: 72%;
  margin-left: 24%;
}

.chart {
  position: relative;
  flex: 1;
  height: 559px;
}

#chart {
  width: 100%;
  height: 100%;
  overflow: visible;
}

#chart text {
  fill: #444;
}

#chart line {
  stroke-width: 2;
}

.plot-bg { fill: #fff; stroke: #c8c8c8; }
.grid-minor { stroke: #e6e6e6; }
.grid-major { stroke: #cdcdcd; }
.grid-decade { stroke: #a0a0a0; }
.crosshair { stroke: #444; }
.red { fill: none; stroke: #d40000; stroke-width: 2; stroke-linejoin: round; }
.black { fill: none; stroke: #000; stroke-width: 2; stroke-linejoin: round; }
.black-fill { fill: #000; stroke: #000; }
#chart .tone { stroke-width: 3; }

/* things lying over the graph */
.cursor-tag {
  position: absolute;
  background: #fff;
  border: 1px solid #22d;
  color: #22d;
  text-align: center;
  line-height: 18px;
}

.cursor-y {
  left: 14px;
  top: 9px;
  width: 33px;
}

.cursor-x {
  right: 60px;
  top: 533px;
  width: 40px;
}

.plain {
  flex: none;
}

.zoom-y {
  position: absolute;
  left: 54px;
  top: 24px;
  display: flex;
  flex-direction: column;
  gap: 9px;
  padding: 2px;
  background: #fff;
}

.unit-select {
  position: absolute;
  left: 51px;
  top: 79px;
  width: 89px;
  height: 27px;
}

.unit-select select {
  padding-left: 9px;
}

.bubble {
  background: rgba(255, 255, 255, 0.85);
  border: 4px solid #d8d8d8;
  border-radius: 14px;
}

.distortion {
  position: absolute;
  left: 145px;
  top: 21px;
  width: 280px;
  display: grid;
  grid-template-columns: 51% 49%;
  row-gap: 7px;
  padding: 9px 6px 5px 4px;
}

.pair {
  display: grid;
  grid-template-columns: 43px auto;
  column-gap: 8px;
}

.pair span:first-child {
  justify-self: end;
  white-space: nowrap;
}

.pair b {
  white-space: nowrap;
}

.wide {
  grid-column: span 2;
  padding-left: 66px;
}

.levels {
  position: absolute;
  right: 147px;
  top: 21px;
  width: 152px;
  height: 109px;
  display: flex;
  flex-direction: column;
  align-items: center;
  padding-top: 5px;
  font-size: 11px;
  line-height: 16px;
  white-space: nowrap;
}

.levels strong {
  font-size: 22px;
  font-weight: 400;
  line-height: 30px;
}

.record {
  position: absolute;
  right: 29px;
  top: 22px;
  width: 59px;
  height: 54px;
  display: flex;
  align-items: center;
  justify-content: center;
  background: #d8d8d8;
  border: 2px solid #88aee8;
  border-radius: 4px;
  box-shadow: inset 0 2px 2px #777;
}

.tooltip {
  position: absolute;
  z-index: 2;
  left: 921px;
  top: 85px;
  padding: 4px 10px;
  background: #fff;
  border: 1px solid #888;
  box-shadow: 2px 2px 4px rgba(0, 0, 0, 0.25);
  white-space: nowrap;
}

.range-tools {
  position: absolute;
  right: 29px;
  top: 411px;
  width: 114px;
  display: flex;
  flex-direction: column;
  gap: 4px;
}

.range-tools .btn {
  height: 24px;
}

.slope {
  align-self: flex-end;
  width: 95px;
  padding: 2px 0;
  border-radius: 16px;
  text-align: center;
}

.zoom-x {
  display: flex;
  align-self: flex-end;
  gap: 12px;
  margin-top: -2px;
  padding: 4px 6px;
  background: rgba(255, 255, 255, 0.5);
}

/* legend */
.legend {
  display: grid;
  grid-template-columns: 1fr 1fr;
  gap: 5px 47px;
  margin: 5px 39px 4px 52px;
  padding: 4px 48px 2px 9px;
  height: 54px;
  background: #fff;
  border: 1px solid #d2d2d2;
}

.trace {
  display: flex;
  align-items: center;
}

.trace .choice {
  width: 229px;
}

.trace i {
  width: 63px;
  height: 2px;
  background: #000;
}

.trace > span {
  margin-left: auto;
}

.muted {
  color: #bbb;
}

.peak {
  color: #d8141e;
}

.peak i {
  background: #e01818;
}

/* status bar */
.statusbar {
  display: flex;
  height: 31px;
  border-top: 1px solid #dcdcdc;
  line-height: 32px;
  white-space: nowrap;
}

.statusbar > div {
  padding: 0 6px 0 5px;
  border-right: 1px solid #dcdcdc;
}

.statusbar .s-mem {
  width: 102px;
  padding-left: 2px;
}

.statusbar .bits {
  display: flex;
  gap: 9px;
  padding: 0 9px 0 6px;
  font-size: 15px;
}

.on { color: #9c3; }
.off { color: #7aa7f0; }

.statusbar .s-fill {
  flex: 1;
}

.statusbar .s-end {
  width: 253px;
  border: none;
}

/* taskbar */
.taskbar {
  display: flex;
  align-items: stretch;
  height: 37px;
  margin-left: -1px;
  color: #fff;
  background: linear-gradient(90deg, #234b5d 0, #4c6170 18%, #5c5964 20%, #6a523a 23%, #555 25%, #59586a 28%, #505050 33%, #5b5b5b 50%, #5c5c5c 75%, #6b6468 83%, #44546a 86%, #182f59 88%);
}

.start {
  width: 46px;
  display: flex;
  align-items: center;
  justify-content: center;
  background: #234b5d;
}

.search {
  width: 320px;
  display: flex;
  align-items: center;
  gap: 14px;
  padding-left: 14px;
  background: #f0f0f0;
  border: 1px solid #ccc;
}

.search input {
  flex: 1;
  min-width: 0;
  border: none;
  background: none;
  font-size: 18px;
}

.search input::placeholder {
  color: #222;
}

.apps {
  display: flex;
  width: 696px;
}

.app {
  flex: 1;
  display: flex;
  align-items: center;
  justify-content: center;
}

.running {
  background: linear-gradient(#76b9ed, #76b9ed) center bottom / 35px 3px no-repeat;
}

.current {
  background: linear-gradient(#76b9ed, #76b9ed) center bottom / 46px 3px no-repeat, #7c7c7c;
}

.tray {
  display: flex;
  align-items: center;
  margin-left: auto;
  margin-right: 4px;
  padding-right: 24px;
  border-right: 1px solid #8593ac;
  font-size: 16px;
}

.weather {
  display: flex;
  align-items: center;
  gap: 12px;
  margin-right: 18px;
}

.tray-btn {
  width: 40px;
  display: flex;
  justify-content: center;
}

.clock {
  width: 50px;
  font-size: 14px;
  text-align: center;
}

.notify {
  margin-left: 15px;
}

.t-dsp { font-size: 7px; fill: #888; }
.t-office { font-size: 8px; font-weight: bold; fill: #fff; }
.t-rew { font-size: 8px; fill: #fff; }
.t-badge { font-size: 11px; fill: #fff; }
```
FILE: script.js
```
const NS = "http://www.w3.org/2000/svg";

function add(parent, tag, attrs, text) {
  const el = document.createElementNS(NS, tag);
  for (const key in attrs) el.setAttribute(key, attrs[key]);
  if (text) el.textContent = text;
  parent.appendChild(el);
  return el;
}

let seed = 7;
function rand() {
  seed = (seed * 16807) % 2147483647;
  return seed / 2147483647;
}

// generator preview: f + 2f + 3f
function drawWave() {
  const svg = document.getElementById("wave");
  const w = svg.clientWidth;
  const mid = svg.clientHeight / 2;
  const period = w / 40;
  let d = `M0 ${mid}`;
  for (let x = 0; x <= w; x += 0.25) {
    const t = (2 * Math.PI * x) / period;
    const v = Math.sin(t) + Math.sin(2 * t) + Math.sin(3 * t);
    d += `L${x} ${(mid - v * 24).toFixed(1)}`;
  }
  d += `L${w} ${mid}z`;
  add(svg, "path", { d });
  add(svg, "line", { x1: 0, x2: w, y1: mid, y2: mid, "stroke-dasharray": "3 1" });
}

// traces: x on a 897 unit wide log axis, value in dB
const peakLow = [0,31.5,4,29.4,7,28.1,11,29.3,16,27.2,19.5,31.5,24,33.4,27,32.3,31.5,28.2,35,29.8,38.5,27.6,42,27.4,45.5,25,48,24.3,52,26.4,57,24,62,22.1,64.5,24.7,67,23.1,70,25.1,72.5,24.1,75,27.6,78.5,27.2,83,29,86,27.9,89.5,29.6,92,30,95,31.5,99,24.1,102,25.8,104,23.8,108,23.8,110.5,22.1,114,26.5,116,26.9,118,26.5,119.5,22.9,124,22.9,127,20.5,130.5,23.5,134.5,22.3,137,21.8,140.5,18.9,142.5,22.6,146,22.2,147,19.4,149.5,21.3,154,19.1,156,20.6,158.5,24.7,163.5,23.5,165,27.6,167,29.1,168.5,23.5,174.5,19.1,179,22.1,181,24.7,184,25.9,186,22.6,190,20.8,191.5,24.4,193,22.2,196.5,21.6,197,24.4,199,21.5,201,21.3,203.5,22.9,205,27.2,206,23.5,210.5,24.4,212.5,30,214,29.1,216,33.6,219.5,34.2,222,32.3,224.5,27,227,22.2,230.5,25.6,231.5,22.4,235,24.4,236.5,22.3,241,26.4,244,24,246,26.5,249.5,24.7,252,30.2,254.5,27.6,256,21.3,258.5,27.4,260,23.8,262,29,263.5,23.1,266,28.8,269.5,27.6,271,35.6,274.5,32.9,277,35.5,279,30,280,27.6,282,37.8,283.5,31.2,285,34.7,287,30.6,292,22.6,294,28.8,296,26.6,298,31.9,300.5,27.6,303,20.6,306.5,37.1,310,38.2,313,16.9,315.5,34.5,318,27.2,320.5,30.9,322.5,28,324.5,29.4,326,21.8,327,18.8,329.5,23.8,333,17.8,335,25.5,338,20.6,340.5,19,344,24.7,345.5,21.5,347,25.6,348.5,18.8,350.5,25,353,17.6,355,16.8,356.5,25,359.5,26.5,362,34,365,32,367.5,20.6,370,30.7,372,17.1,376,25.9,379,16.8,381,30.5,384,28.8,385.5,20.6,388,29.4,388.5,18.2,390.5,34.7,393,34.9,394.5,22.9,396.5,11.2,398.5,21,400,9,403,23.5,405,26.5,406,20,408,27.8,411,13.8,413.5,23.5,414.5,31,416.5,39.6,418,31,419.5,36.2,421,30,423,35.9,424.5,26.5,427,33.8,429.5,25.3,432,30.6,434,18.2,436.5,28.2,439,29.4,442,26.5,444.5,19.4,446,17,448,28.8,451,29.1,453,15.3,456,28.2,459.5,31.8,462,33.5,463.5,20.3];
const peakTop = [464,33,465,32.6,469.5,28.8,473,32.2,475,25.9,479,26.5,484,37.6,487,28.5,489,24.4,493,24.4,498,22.7,502,26.5,505,22.7,508,29.5,513,27.6,517,28.5,523,26.5,526,28.8,530.5,33.2,534.5,32,537,35.6,540,28.8,543,32.7,546,27.6,549.5,32.8,552,29,554.5,35.6,559.5,34.1,564.5,35,569,36.2,573.5,38.9,575,35,579.5,38.1,581,33,584.5,33.2,588,30.6,591,28.5,595,25.9,600,33.8,603,28.8,607,30.7,609,28.2,615,31.5,618,28.8,624,28.2,626,23.5,630,26,634,26,637,30.5,640.5,28.8,647,30.2,651,27,654.5,23.5,658.5,22,663,26.2,669.5,26.5,674.5,31.8,683,32.3,691,30.6,696,27,701,23.5,705,20.9,708,25,713,25.6,716,22.9,721,23.2,724.5,18.8,731,18.8,736,20.9,744.5,23.2,753.5,23.5,758,19.4,764.5,16.5,768,20.3,773,22.2,776,20.5,782,25,784.5,21.2,789.5,20.9,793,18,805,18,808,20,813,20,816,17,828,19.1,835,17,850,16,870,15.5,885,14.5,897,13];
const peakBottom = [464,20,468,15.3,476,15.3,481,25,484,30.6,487,24,491,22,500,15.3,508,18,521,20.6,526,22.9,533,23.5,540,17,545,12.6,553,16.5,558,18,563,15.3,567,20,572,13.8,575,28,579.5,22.9,584,15,600,12,695,10,701,4,740,4,744,7.6,751,13.5,754.5,6.5,758,4,897,4];
const specLow = [0,19.9,4,18.5,7,16.6,9.5,16.4,12,17.4,16,20.9,19.5,22.9,23,24.1,27,25.6,29,25.8,33,24.8,35,23.5,37,19.4,39,17.5,43,17.2,46.5,17,47.5,20,49,23.1,51,20.6,55,15.7,57,20,59,23.1,61,20.6,64.5,16.3,67,20.3,70,22.1,73,23.4,76,21.5,78,19.4,80,16.9,81.5,17,83.5,26.4,85.5,19.4,87.5,15.3,89,15.4,90,21.8,93,28.2,94.5,29,96,27.7,98,18.8,100,15.1,102,20.3,104,20.9,106,20.9,108,23.8,110,23.5,111,17.6,114,6.2,115,6.2,117,24.4,118.5,24.6,121.5,4,123,4,124,17,126,17.8,128.5,14.1,130,4,132,9,134.5,5.4,136,7,137.5,16.6,139.5,15.3,141,17.2,143,12.4,145,6,147.5,12.1,151,15.9,153.5,9,155.5,15.3,158.5,22.2,161,12,163.5,17,165,12,167,16.6,168.5,9.9,170,13.8,172,10.7,174.5,16.9,177.5,4,179,11,181,20.2,183,15,186,19.4,187,15,189,9.4,191,16.6,192,12,194.5,19.4,196.5,4.7,199,17.8,201,8.5,203,11.8,204,4,206,17,207,18.5,209.5,9.4,212,15.5,213.5,4];
const spikes = [216,11.5,223,13.8,225,14.7,229,11.8,233,13,238,10.5,242,10.3,250.5,13.2,254.5,17.8,256,13.6,259.5,11.6,265,10.4,273,17.2,275,14.7,279,11.3,281.5,14.7,286,13.7,288,10,294,14.7,296.5,14.4,298,21,300,10.4,303,10,309,9.5,314.5,11.4,318,8.8,325,11.2,333,11.3,337,8.5,341,9.1,349,11.5,351,9.4,358.5,12.7,361,8.9,368,8.8,374,9.3,379,10.7,385,9,387.5,17,395,19.2,398.5,19.7,405,15.9,408,18.3,414,22.4,417,17.7,423.5,17.3,426,21.6,431,19.4,434.5,17.4,439.5,17.8,441.5,18.8,446,17.8,448.5,17.6,454,17.4,456,16.8,460,18.8,462,19.3,467,16.5,469,15,473,12.4,476,12.4,478,15.9,481,12,483,19,485,20];
const specTop = [486,20,489.5,22.4,492,15,495,23.1,498.5,20.6,501,16,504.5,20.9,513,20.9,517,22.4,524.5,22.2,528.5,21.5,533,20.3,536,16.5,540,14.7,544,12.1,545,5.3,548,6.2,551,11.8,556,18.2,559.5,17,563,14.7,565,19.1,569.5,17,571,11.8,573,12.4,576,20.3,578.5,17,581,22.9,585.5,25,590,25.9,595,24.7,601,22.9,608,23.8,611,21.8,616,19.1,621,17,626,13.5,629.5,17,633,20.9,637,18,641,18.8,645,17,648,19.4,651,15.3,653.5,9.7,656,19.7,663,19,668,17.9,673,15.9,678.5,18.5,683,19.7,689.5,15.3,693,12.4,699.5,7.6,702,10.9,706,10.5,709.5,5.3,713,7.6,718,8.8,723,4,728,6.5,733,6.2,738,9.4,745,4.7,748,4.4];

function at(points, x) {
  for (let i = 2; i < points.length; i += 2) {
    if (x <= points[i]) {
      const f = (x - points[i - 2]) / (points[i] - points[i - 2]);
      return points[i - 1] + f * (points[i + 1] - points[i - 1]);
    }
  }
  return points[points.length - 1];
}

function drawChart() {
  const svg = document.getElementById("chart");
  const left = 49;
  const top = 19;
  const bottom = 529;
  const right = svg.clientWidth - 27;
  const w = right - left;
  const X = u => +(left + (u * w) / 897).toFixed(1);
  const Y = db => +(bottom - ((Math.max(db, 4.4) - 4.4) * (bottom - top)) / 89.8).toFixed(1);
  const FX = hz => left + (Math.log10(hz / 20) / 3) * w;
  const line = (x1, y1, x2, y2, cls) => add(svg, "line", { x1, y1, x2, y2, class: cls });

  add(svg, "rect", { x: left, y: top, width: w, height: bottom - top, class: "plot-bg" });
  for (let db = 6; db <= 94; db += 2) {
    const y = Math.round(Y(db));
    line(left, y, right, y, db % 10 ? "grid-minor" : "grid-major");
    if (db % 10 === 0) add(svg, "text", { x: left - 3, y: y + 5, "text-anchor": "end" }, String(db));
  }
  for (let decade = 10; decade <= 10000; decade *= 10) {
    for (let i = 1; i < 10; i++) {
      const hz = decade * i;
      if (hz < 20 || hz > 20000) continue;
      const x = Math.round(FX(hz));
      line(x, top, x, bottom, i === 1 ? "grid-decade" : "grid-major");
    }
  }
  const labels = { 20: "20", 30: "30", 40: "40", 50: "50", 60: "60", 80: "80", 100: "100", 200: "200", 300: "300", 400: "400", 600: "600", 800: "800", 1000: "1k", 2000: "2k", 3000: "3k", 4000: "4k", 5000: "5k", 6000: "6k", 8000: "8k", 10000: "10k", 20000: "20kHz" };
  for (const hz in labels) {
    add(svg, "text", { x: FX(hz), y: bottom + 20, "text-anchor": "middle" }, labels[hz]);
  }
  add(svg, "text", { x: 24, y: 10 }, "SPL");

  // peak trace
  let d = "";
  for (let i = 0; i < peakLow.length; i += 2) d += `${i ? "L" : "M"}${X(peakLow[i])} ${Y(peakLow[i + 1])}`;
  // fine ripple, growing with frequency
  for (let u = 228; u < 464; u += 0.8) {
    const v = at(peakLow, u);
    const size = u < 300 ? 1.5 : 3;
    d += `${u === 228 ? "M" : "L"}${X(u)} ${Y(v - rand() * size)}L${X(u + 0.4)} ${Y(v + rand() * size * 0.3)}`;
  }
  for (let u = 464; u < 896; u += 0.8) {
    const hi = at(peakTop, u);
    const lo = at(peakBottom, u);
    const dip = rand() * rand() * (hi - lo) * 0.5;
    const rise = u > 758 ? 0 : rand() * rand() * (hi - lo) * 0.25;
    d += `L${X(u)} ${Y(hi - dip)}L${X(u + 0.4)} ${Y(lo + rise)}`;
  }
  add(svg, "path", { d, class: "red" });
  line(X(687), Y(49.4), X(687), Y(10), "red");

  // live spectrum
  d = "";
  for (let i = 0; i < specLow.length; i += 2) d += `${i ? "L" : "M"}${X(specLow[i])} ${Y(specLow[i + 1])}`;
  for (let u = 158; u < 213; u += 1.5) {
    const v = at(specLow, u);
    d += `M${X(u)} ${Y(v)}V${Y(v - rand() * 4)}`;
  }
  for (let i = 0; i < spikes.length; i += 2) d += `M${X(spikes[i])} ${bottom}V${Y(spikes[i + 1])}`;
  for (let u = 204; u < 390; u += 1.3) {
    if (rand() > 0.12) d += `M${X(u)} ${bottom}V${Y(5 + rand() * (u < 310 ? 6 : 4))}`;
  }
  for (let u = 390; u < 486; u += 3) {
    d += `M${X(u)} ${bottom}V${Y((u < 462 ? 14 : 11) + rand() * 5)}`;
  }
  add(svg, "path", { d, class: "black" });

  d = `M${X(486)} ${bottom}`;
  for (let u = 486; u <= 748; u += 1) d += `L${X(u)} ${Y(at(specTop, u) - rand() * rand() * 5)}`;
  add(svg, "path", { d: d + `V${bottom}z`, class: "black-fill" });
  line(X(597.5), Y(57.6), X(597.5), bottom, "black tone");
  line(X(687), Y(44), X(687), bottom, "black");
  line(X(739.8), Y(54), X(739.8), bottom, "black tone");

  line(left, top, right, top, "crosshair");
  line(FX(13300) - 1, top, FX(13300) - 1, bottom + 4, "crosshair");
}

drawWave();
drawChart();
```
